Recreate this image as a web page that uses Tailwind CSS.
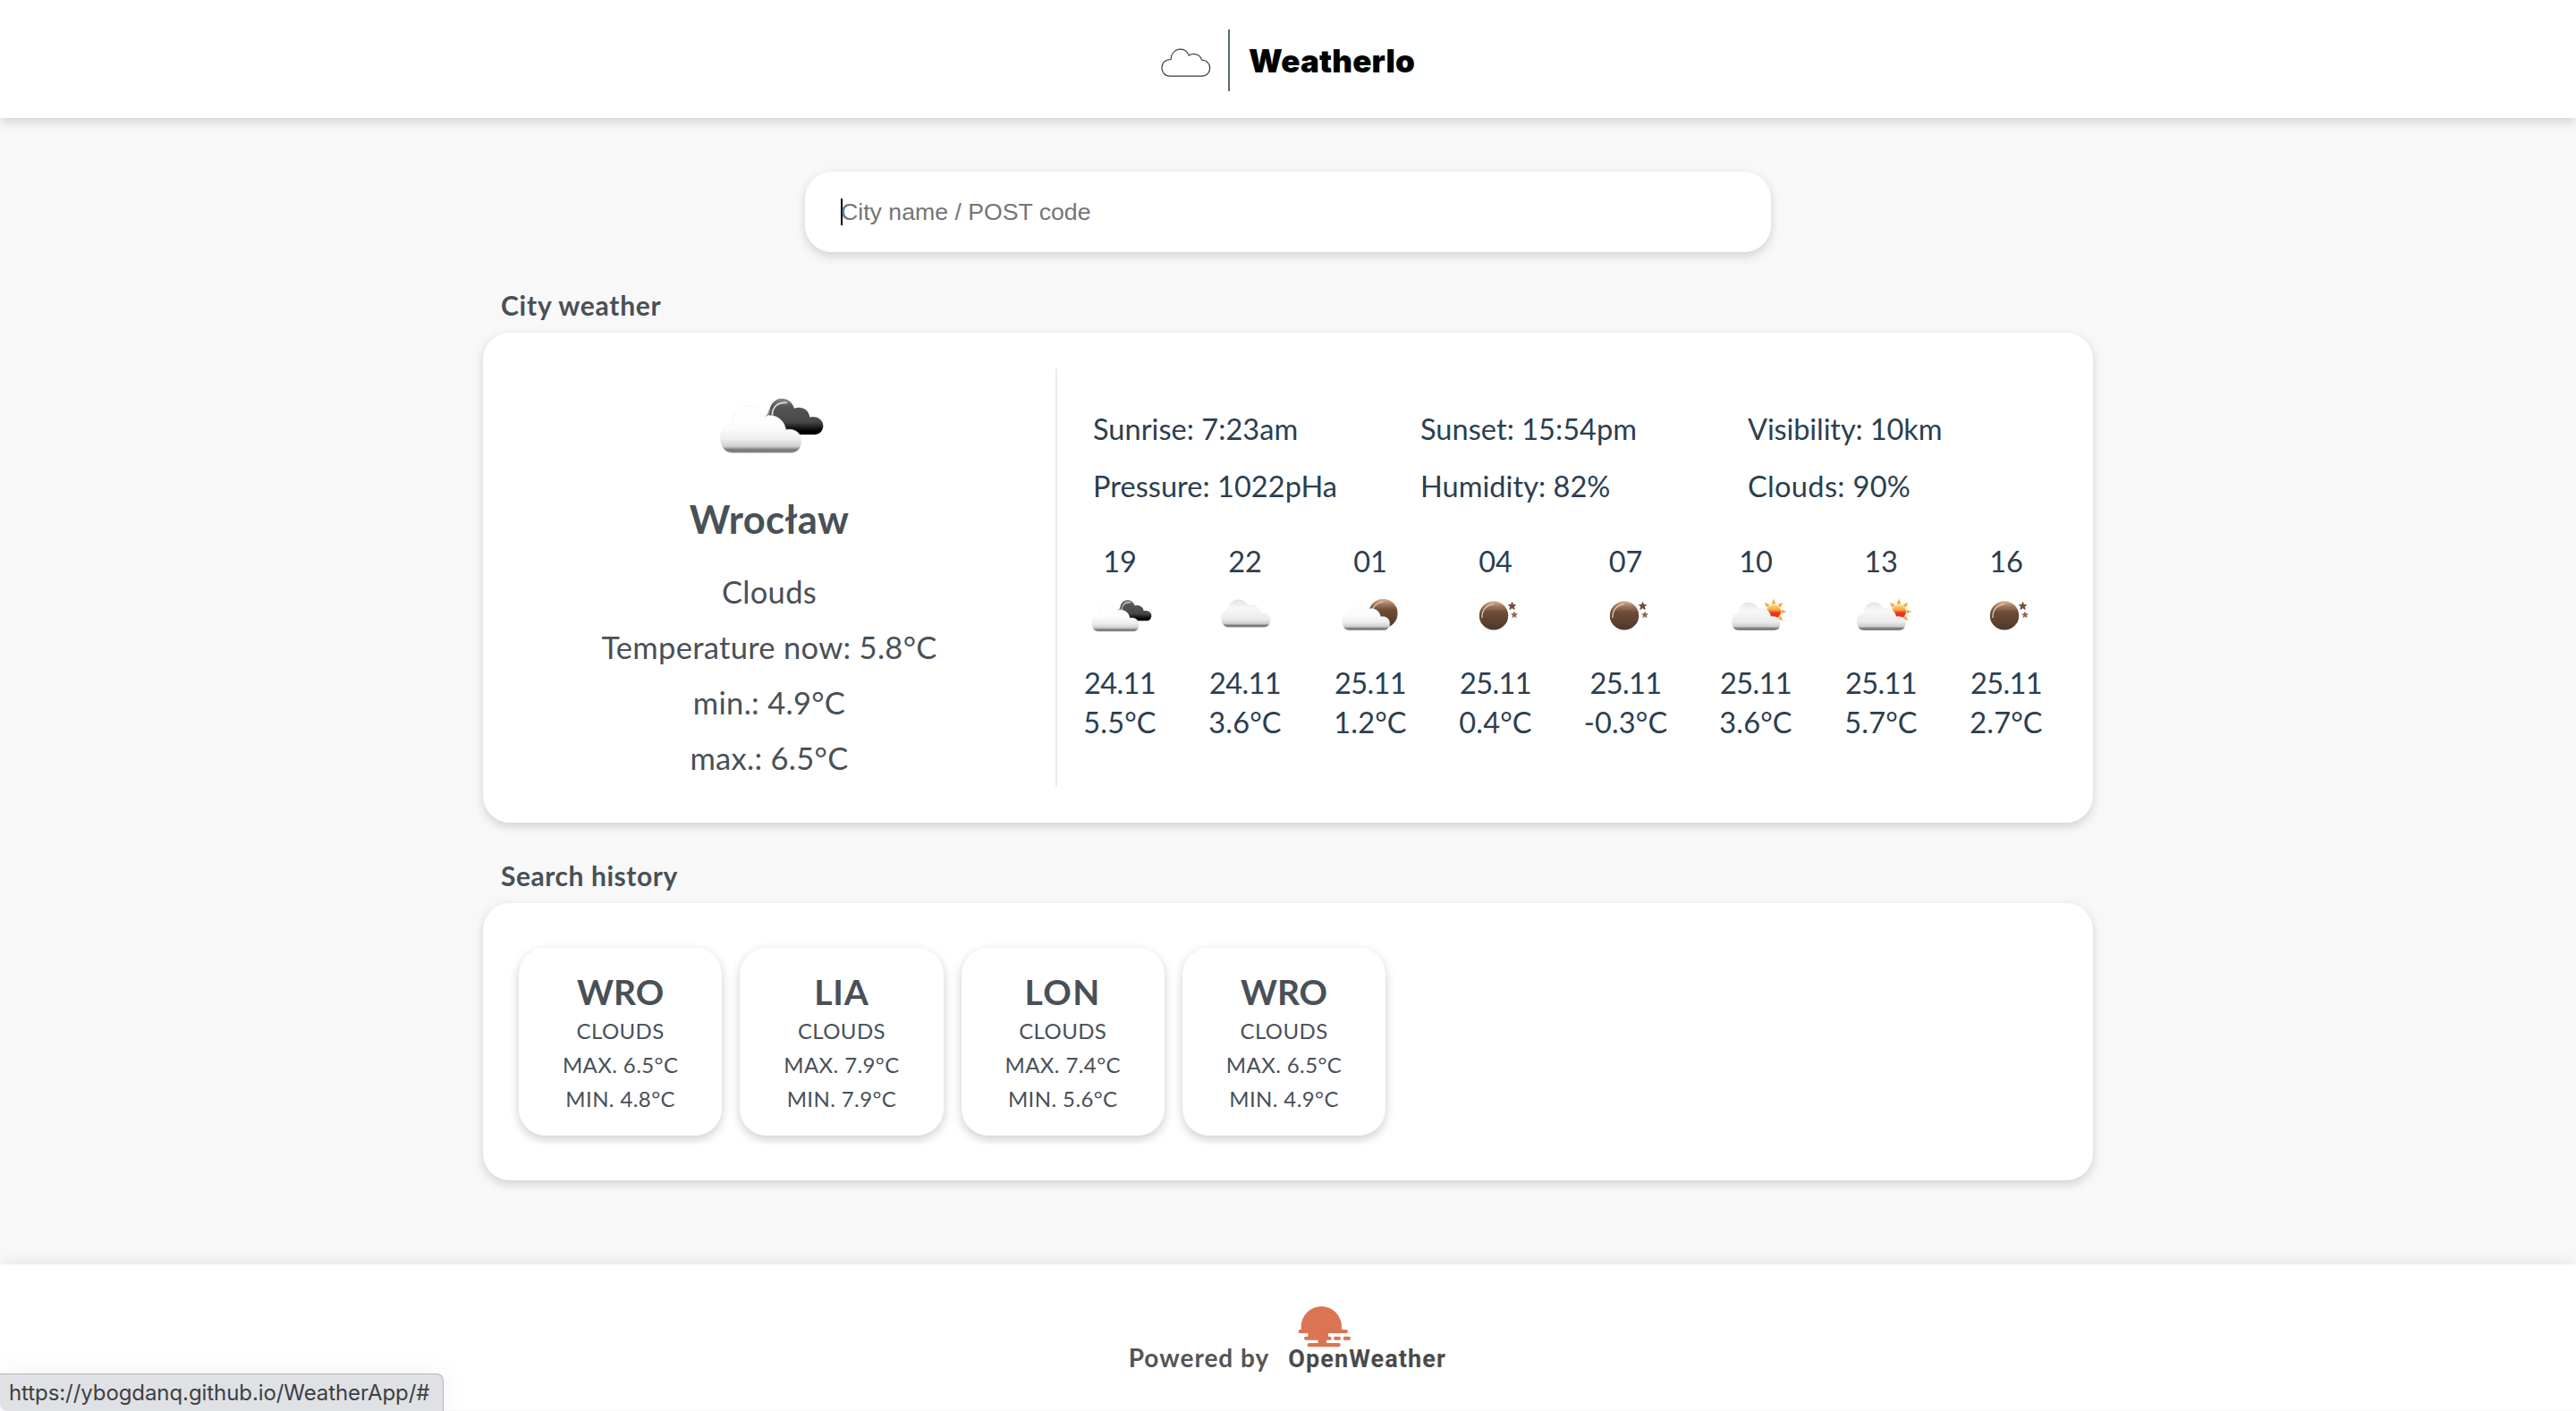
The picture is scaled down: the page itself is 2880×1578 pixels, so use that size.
<!DOCTYPE html>
<html lang="en">
<head>
<meta charset="utf-8">
<title>Weatherlo</title>
<script src="https://cdn.jsdelivr.net/npm/@tailwindcss/browser@4"></script>
</head>
<body class="relative flex h-[1578px] w-[2880px] flex-col overflow-hidden bg-[#f8f8f8] font-['Lato',sans-serif] text-[#495057]">

<!-- shared weather icon shapes -->
<svg class="absolute size-0" aria-hidden="true">
  <defs>
    <linearGradient id="gc" x1="0" y1="0" x2="0" y2="1"><stop offset="0" stop-color="#fff"/><stop offset=".45" stop-color="#fcfcfc"/><stop offset=".7" stop-color="#eee"/><stop offset=".86" stop-color="#cfcfcf"/><stop offset=".93" stop-color="#777"/><stop offset="1" stop-color="#8a8a8a"/></linearGradient>
    <linearGradient id="gg" x1="0" y1="0" x2="0" y2="1"><stop offset="0" stop-color="#e2e2e2"/><stop offset=".3" stop-color="#f8f8f8"/><stop offset=".7" stop-color="#ebebeb"/><stop offset=".86" stop-color="#cfcfcf"/><stop offset=".93" stop-color="#777"/><stop offset="1" stop-color="#8a8a8a"/></linearGradient>
    <linearGradient id="gd" x1="0" y1="0" x2="0" y2="1"><stop offset="0" stop-color="#8a8a8a"/><stop offset=".22" stop-color="#555"/><stop offset=".65" stop-color="#484848"/><stop offset=".9" stop-color="#000"/></linearGradient>
    <linearGradient id="gm" x1="0" y1="0" x2="0" y2="1"><stop offset="0" stop-color="#dcb698"/><stop offset=".16" stop-color="#a57e60"/><stop offset=".38" stop-color="#6d4d37"/><stop offset="1" stop-color="#4d3728"/></linearGradient>
    <linearGradient id="gs" x1="0" y1="0" x2="0" y2="1"><stop offset="0" stop-color="#ffe08f"/><stop offset=".38" stop-color="#f7a535"/><stop offset=".58" stop-color="#ee3524"/><stop offset="1" stop-color="#e8301f"/></linearGradient>
    <path id="shape" d="M90 230C60 230 48 205 48 180C48 155 62 137 86 132C88 98 110 72 142 72C168 72 188 86 196 108C228 96 262 116 268 152C296 146 320 162 320 190C320 215 306 230 284 230Z"/>
    <g id="broken">
      <path d="M212 112C208 70 228 47 254 47C275 47 290 60 296 80C320 72 345 84 348 110C375 104 393 120 393 138C393 156 380 168 364 168H270Z" fill="url(#gd)"/>
      <path d="M195 110C208 108 212 96 214 86" fill="none" stroke="#888" stroke-width="6"/>
      <path d="M222 104C222 76 240 58 272 61" fill="none" stroke="#d4d4d4" stroke-width="6"/>
      <use href="#shape" fill="url(#gc)" stroke="#f0f0f0" stroke-width="2"/>
    </g>
    <g id="moon">
      <circle cx="48" cy="33.4" r="16.2" fill="url(#gm)"/>
      <path d="M35 36C34.500 27 40 21.500 48 20.500" fill="none" stroke="#e0c4ae" stroke-width="1.300"/>
      <path d="M68.500 18.500L69.600 21.500L72.500 21.600L70.300 23.500L71.200 26.500L68.500 24.800L65.800 26.500L66.700 23.500L64.500 21.600L67.400 21.500Z" fill="#6d4d3c" stroke="#6d4d3c"/>
      <path d="M71 29L71.900 31.500L74.400 31.600L72.500 33.200L73.200 35.700L71 34.300L68.800 35.700L69.500 33.200L67.600 31.600L70.100 31.500Z" fill="#84614c" stroke="#84614c" stroke-width=".5"/>
    </g>
    <g id="sunny">
      <g fill="#f4a63c">
        <path id="ray" d="M67.700 20.500L70 14.500L72.300 20.500Z"/>
        <use href="#ray" transform="rotate(45 70 29)"/><use href="#ray" transform="rotate(90 70 29)"/><use href="#ray" transform="rotate(135 70 29)"/><use href="#ray" transform="rotate(-45 70 29)"/>
      </g>
      <circle cx="70" cy="29" r="8" fill="url(#gs)"/>
      <use href="#shape" transform="translate(13.400 4) scale(.2)" fill="url(#gg)"/>
    </g>
  </defs>
</svg>

<header class="flex h-[132px] shrink-0 items-center justify-center bg-white shadow-[0_4px_12px_rgba(0,0,0,0.16)]">
  <svg class="mt-[7px] h-8 w-[56px]" viewBox="84 129 168 96" fill="none" stroke="#2f4040" stroke-width="3.6"><path d="M114 222.500C78 221 76 167 117 166.500C119 126 167 121 178 153C193 143 217 150 220 168C258 170 257 222.500 220 222.500Z"/></svg>
  <div class="ml-[19px] mt-0.5 h-[69px] w-0.5 bg-[#5b6b6b]"></div>
  <h1 class="ml-[21px] mt-[3px] font-['Inter',sans-serif] text-[35px] leading-[44px] font-black tracking-[0.15px] text-black">Weatherlo</h1>
</header>

<main class="mx-auto flex w-[1800px] flex-col">
  <div class="mx-auto mt-[60px] flex h-[90px] w-[1080px] items-center rounded-[30px] bg-white pl-10 font-['Liberation_Sans',sans-serif] text-[26.67px] text-[#757575] shadow-[0_4px_12px_rgba(0,0,0,0.16)]">
    <span class="h-[30px] w-0.5 bg-black"></span><span class="-ml-0.5">City name / POST code</span>
  </div>

  <h2 class="mt-[39px] pl-5 text-[30px] leading-10 font-bold tracking-[0.75px]">City weather</h2>
  <section class="mt-[11px] flex h-[548px] rounded-[30px] bg-white py-10 shadow-[0_4px_12px_rgba(0,0,0,0.16)]">
    <div class="flex w-[642px] flex-col items-center border-r-2 border-[#ebebeb] text-[34.5px] leading-[62px] tracking-[0.3px]">
      <svg class="mt-[18px] h-[90px] w-[150px] shrink-0" viewBox="-13 0 450 270"><use href="#broken"/></svg>
      <h3 class="mt-[31px] mb-[22px] text-[43.5px] leading-[58px] font-bold tracking-[0.3px]">Wrocław</h3>
      <p>Clouds</p>
      <p>Temperature now: 5.8°C</p>
      <p>min.: 4.9°C</p>
      <p>max.: 6.5°C</p>
    </div>
    <div class="flex-1 text-[32.5px] text-[#2c3e50]">
      <div class="mt-9 grid grid-cols-[366px_366px_366px] pl-10 leading-[64px] tracking-[0.05px]">
        <span>Sunrise: 7:23am</span><span>Sunset: 15:54pm</span><span class="tracking-[-0.1px]">Visibility: 10km</span>
        <span>Pressure: 1022pHa</span><span>Humidity: 82%</span><span class="tracking-[0.35px]">Clouds: 90%</span>
      </div>
      <div class="mt-[30px] grid grid-cols-[140px_140px_140px_140px_151px_140px_140px_140px] text-center leading-[44px]">
        <div><p>19</p><svg class="mx-auto mt-[5px] mb-[17px] h-[70px] w-[100px]" viewBox="0 0 100 70"><use href="#broken" transform="translate(9.4 6.9) scale(.1933)"/></svg><p class="tracking-[-0.6px]">24.11</p><p class="tracking-[0.15px]">5.5°C</p></div>
        <div><p>22</p><svg class="mx-auto mt-[5px] mb-[17px] h-[70px] w-[100px]" viewBox="0 0 100 70"><use href="#shape" transform="translate(14.1 1.6) scale(.2 .196)" fill="url(#gg)" stroke="#e8e8e8" stroke-width="3"/></svg><p class="tracking-[-0.6px]">24.11</p><p class="tracking-[0.15px]">3.6°C</p></div>
        <div><p>01</p><svg class="mx-auto mt-[5px] mb-[17px] h-[70px] w-[100px]" viewBox="0 0 100 70"><use href="#moon" transform="translate(16.4 -2.4)" clip-path="url(#disc)"/><clipPath id="disc"><rect x="30" y="10" width="34.5" height="45"/></clipPath><use href="#shape" transform="translate(9.3 5.2) scale(.195)" fill="url(#gc)" stroke="#ededed" stroke-width="2"/></svg><p class="tracking-[-0.6px]">25.11</p><p class="tracking-[0.15px]">1.2°C</p></div>
        <div><p>04</p><svg class="mx-auto mt-[5px] mb-[17px] h-[70px] w-[100px]" viewBox="0 0 100 70"><use href="#moon"/></svg><p class="tracking-[-0.6px]">25.11</p><p class="tracking-[0.15px]">0.4°C</p></div>
        <div><p>07</p><svg class="mx-auto mt-[5px] mb-[17px] h-[70px] w-[100px]" viewBox="0 0 100 70"><use href="#moon"/></svg><p class="tracking-[-0.6px]">25.11</p><p class="tracking-[0.15px]">-0.3°C</p></div>
        <div><p>10</p><svg class="mx-auto mt-[5px] mb-[17px] h-[70px] w-[100px]" viewBox="0 0 100 70"><use href="#sunny"/></svg><p class="tracking-[-0.6px]">25.11</p><p class="tracking-[0.15px]">3.6°C</p></div>
        <div><p>13</p><svg class="mx-auto mt-[5px] mb-[17px] h-[70px] w-[100px]" viewBox="0 0 100 70"><use href="#sunny"/></svg><p class="tracking-[-0.6px]">25.11</p><p class="tracking-[0.15px]">5.7°C</p></div>
        <div><p>16</p><svg class="mx-auto mt-[5px] mb-[17px] h-[70px] w-[100px]" viewBox="0 0 100 70"><use href="#moon"/></svg><p class="tracking-[-0.6px]">25.11</p><p class="tracking-[0.15px]">2.7°C</p></div>
      </div>
    </div>
  </section>

  <h2 class="mt-[39px] pl-5 text-[30px] leading-10 font-bold tracking-[0.55px]">Search history</h2>
  <section class="mt-[11px] h-[310px] rounded-[30px] bg-white px-[30px] py-10 shadow-[0_4px_12px_rgba(0,0,0,0.16)]">
    <div class="flex gap-5 overflow-hidden p-2.5 text-center text-[24px] leading-[38px] tracking-[0.4px]">
      <div class="h-[210px] w-[227.3px] rounded-[30px] bg-white pt-[27px] shadow-[0_4px_12px_rgba(0,0,0,0.2)]"><h3 class="text-[39px] leading-[44px] font-bold tracking-normal">WRO</h3><p class="mt-[3px]">CLOUDS</p><p>MAX. 6.5°C</p><p>MIN. 4.8°C</p></div>
      <div class="h-[210px] w-[227.3px] rounded-[30px] bg-white pt-[27px] shadow-[0_4px_12px_rgba(0,0,0,0.2)]"><h3 class="text-[39px] leading-[44px] font-bold tracking-[0.8px]">LIA</h3><p class="mt-[3px]">CLOUDS</p><p>MAX. 7.9°C</p><p>MIN. 7.9°C</p></div>
      <div class="h-[210px] w-[227.3px] rounded-[30px] bg-white pt-[27px] shadow-[0_4px_12px_rgba(0,0,0,0.2)]"><h3 class="text-[39px] leading-[44px] font-bold tracking-[1.5px]">LON</h3><p class="mt-[3px]">CLOUDS</p><p>MAX. 7.4°C</p><p>MIN. 5.6°C</p></div>
      <div class="h-[210px] w-[227.3px] rounded-[30px] bg-white pt-[27px] shadow-[0_4px_12px_rgba(0,0,0,0.2)]"><h3 class="text-[39px] leading-[44px] font-bold tracking-normal">WRO</h3><p class="mt-[3px]">CLOUDS</p><p>MAX. 6.5°C</p><p>MIN. 4.9°C</p></div>
    </div>
  </section>
</main>

<footer class="mt-auto flex h-[164px] shrink-0 items-end justify-center border-b-2 border-[#fafafa] bg-white pr-0.5 pb-[42px] shadow-[0_4px_20px_rgba(0,0,0,0.15)]">
  <span class="mr-[21px] pb-0.5 text-[28px] leading-7 font-bold tracking-[1px] text-[#555]">Powered by</span>
  <div class="w-[176px]">
    <svg class="block h-[49px] w-[175px] overflow-visible" viewBox="630 170 525 147">
      <g fill="#da7452">
        <path d="M674 262V250A68 68 0 0 1 810 250V262Z"/>
        <rect x="665" y="260" width="166" height="12" rx="6"/>
        <path d="M697 270H765V284H759V306H731V293H697Z"/>
        <rect x="684" y="283" width="92" height="12" rx="6"/>
        <rect x="783" y="283" width="24" height="12" rx="6"/>
        <rect x="815" y="283" width="25" height="12" rx="6"/>
        <rect x="695" y="305" width="111" height="13" rx="6"/>
      </g>
    </svg>
    <p class="font-['Roboto',sans-serif] text-[27px] leading-7 font-bold tracking-[1.1px] whitespace-nowrap text-[#4a4a4c]">OpenWeather</p>
  </div>
</footer>

<!-- browser link preview -->
<div class="absolute bottom-0 left-0 h-[42px] w-[496px] rounded-tr-lg rounded-bl-lg border-t border-r border-[#b8b8bb] bg-[#dfe1e5] pl-2.5 font-['Inter',sans-serif] text-[24px] leading-[41px] tracking-[-0.08px] whitespace-nowrap text-[#3c4043] shadow-[0_0_30px_rgba(0,0,0,0.06)]">https://ybogdanq.github.io/WeatherApp/#</div>
</body>
</html>
